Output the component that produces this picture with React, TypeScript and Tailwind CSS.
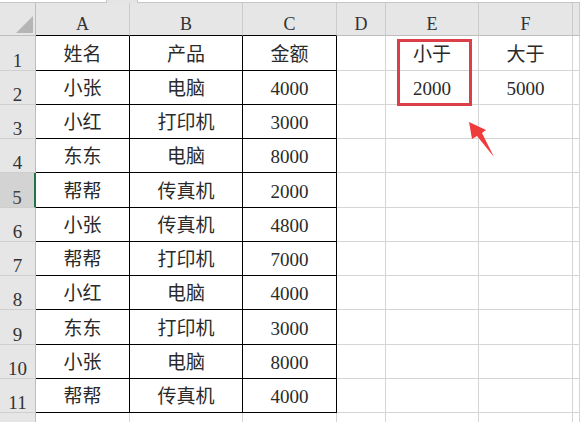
import React from "react"

const cols = ["A", "B", "C", "D", "E", "F", ""]

const rows: string[][] = [
  ["姓名", "产品", "金额", "", "小于", "大于", ""],
  ["小张", "电脑", "4000", "", "2000", "5000", ""],
  ["小红", "打印机", "3000", "", "", "", ""],
  ["东东", "电脑", "8000", "", "", "", ""],
  ["帮帮", "传真机", "2000", "", "", "", ""],
  ["小张", "传真机", "4800", "", "", "", ""],
  ["帮帮", "打印机", "7000", "", "", "", ""],
  ["小红", "电脑", "4000", "", "", "", ""],
  ["东东", "打印机", "3000", "", "", "", ""],
  ["小张", "电脑", "8000", "", "", "", ""],
  ["帮帮", "传真机", "4000", "", "", "", ""],
  ["", "", "", "", "", "", ""],
]

const heights = [
  "h-[35px]", "h-[34px]", "h-[34px]", "h-[34px]", "h-[35px]", "h-[34px]",
  "h-[34px]", "h-[34px]", "h-[35px]", "h-[34px]", "h-[34px]", "h-[34px]",
]

const grid = "grid grid-cols-[36px_94px_113px_94px_49px_93px_94px_1fr]"

export default function App() {
  return (
    <div
      className="relative w-[580px] h-[422px] overflow-hidden bg-white text-[#2a2a2a]"
      style={{ fontFamily: '"Liberation Serif", "Noto Sans CJK SC", serif' }}
    >
      {/* formula bar edge */}
      <div className="flex h-[3px] bg-[#e4e4e4]">
        <div className="w-[107px] bg-white border-b border-r border-[#c6c6c6]" />
        <div className="w-[30px]" />
        <div className="flex-1 bg-white border-b border-l border-[#c6c6c6]" />
      </div>

      {/* column headers */}
      <div className={`${grid} h-[33px] bg-[#e6e6e6]`}>
        <div className="relative border-r border-b border-[#bdbdbd]">
          <div className="absolute left-[16px] top-[13px] w-0 h-0 border-l-[17px] border-l-transparent border-b-[17px] border-b-[#b5b5b5]" />
        </div>
        {cols.map((c, i) => (
          <div
            key={i}
            className={
              i < 3
                ? "flex items-end justify-center border-r border-r-[#cbcbcb] border-b border-b-black text-[18px] leading-[22px] text-[#333]"
                : "flex items-end justify-center border-r border-r-[#cbcbcb] border-b border-b-[#bdbdbd] text-[18px] leading-[22px] text-[#333]"
            }
          >
            {c}
          </div>
        ))}
      </div>

      {/* rows */}
      {rows.map((row, r) => (
        <div key={r} className={`${grid} ${heights[r]}`}>
          <div
            className={
              r === 4
                ? "flex items-end justify-center bg-[#d3d3d3] border-r-2 border-r-[#217346] border-b border-b-[#cfcfcf] text-[19px] leading-[19px] text-[#444]"
                : "flex items-end justify-center bg-[#e6e6e6] border-r border-r-[#bdbdbd] border-b border-b-[#cfcfcf] text-[19px] leading-[19px] text-[#333]"
            }
          >
            {r + 1}
          </div>
          {row.map((v, c) => (
            <div
              key={c}
              className={
                c < 3 && r < 11
                  ? "flex items-center justify-center pt-[3px] border-r border-b border-black text-[19px] leading-[20px]"
                  : "flex items-center justify-center pt-[3px] border-r border-b border-[#d4d4d4] text-[19px] leading-[20px]"
              }
            >
              {v}
            </div>
          ))}
        </div>
      ))}

      {/* highlight box */}
      <div className="absolute left-[397px] top-[39px] w-[75px] h-[67px] border-[3px] border-[#dc3f48]" />

      {/* arrow */}
      <svg className="absolute left-[460px] top-[115px]" width="40" height="50" viewBox="0 0 40 50">
        <polygon points="9,7 26,15 22,18 34,42 17,21 12,24" fill="#ee3b3b" />
      </svg>
    </div>
  )
}
